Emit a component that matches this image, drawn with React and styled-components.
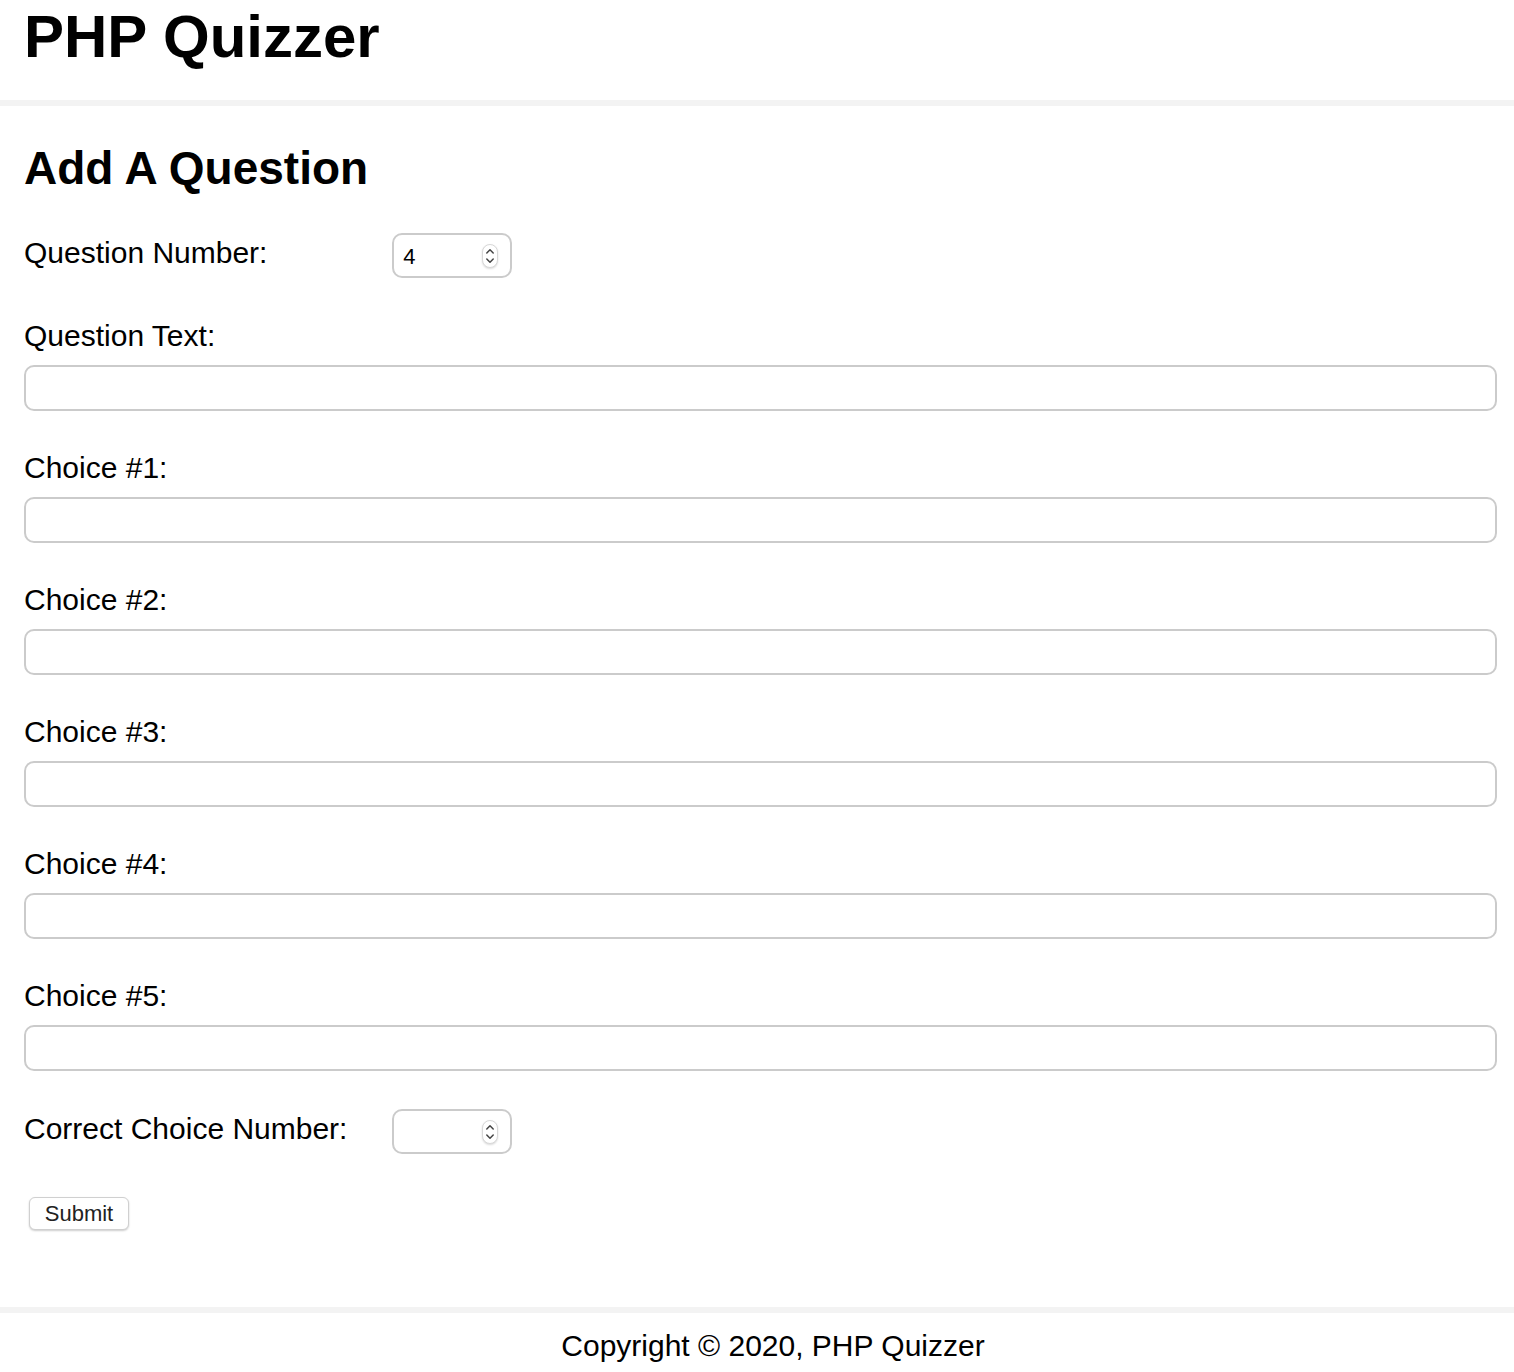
import React from 'react';
import styled, { createGlobalStyle } from 'styled-components';

const GlobalStyle = createGlobalStyle`
  html, body {
    margin: 0;
    padding: 0;
    background: #ffffff;
    color: #000000;
    font-family: 'Liberation Sans', Arial, sans-serif;
  }
`;

const Header = styled.header`
  padding: 2px 24px 29px;
  border-bottom: 6px solid #f3f3f3;
`;

const Logo = styled.h1`
  margin: 0;
  font-size: 60px;
  line-height: 69px;
  font-weight: 700;
`;

const Main = styled.main`
  padding: 36px 17px 77px 24px;
`;

const Title = styled.h2`
  margin: 0 0 39px;
  font-size: 46px;
  line-height: 52px;
  font-weight: 700;
`;

const Form = styled.form`
  display: flex;
  flex-direction: column;
`;

const InlineRow = styled.div`
  display: flex;
  align-items: flex-start;
  margin-top: ${(p) => p.$top || 0}px;
`;

const Field = styled.div`
  display: flex;
  flex-direction: column;
  margin-top: ${(p) => p.$top}px;
`;

const Label = styled.label`
  display: block;
  font-size: 30px;
  line-height: 36px;
  ${(p) => (p.$inline ? 'width: 25%; flex: none; margin-top: 2px;' : 'margin-bottom: 11px;')}
`;

const TextInput = styled.input`
  box-sizing: border-box;
  width: 100%;
  height: 46px;
  border: 2px solid #cbcbcb;
  border-radius: 10px;
  padding: 0 10px;
  font-family: 'Liberation Sans', Arial, sans-serif;
  font-size: 21px;
  background: #fff;
  outline: none;
`;

const NumberWrap = styled.div`
  position: relative;
  width: 120px;
  height: 45px;
`;

const NumberInput = styled.input`
  box-sizing: border-box;
  width: 100%;
  height: 100%;
  border: 2px solid #cbcbcb;
  border-radius: 10px;
  padding: 3px 0 0 9px;
  font-family: 'Liberation Sans', Arial, sans-serif;
  font-size: 22px;
  color: #000;
  background: #fff;
  outline: none;
  -moz-appearance: textfield;
  &::-webkit-inner-spin-button,
  &::-webkit-outer-spin-button {
    -webkit-appearance: none;
    margin: 0;
  }
`;

const Spinner = styled.div`
  position: absolute;
  right: 14px;
  top: 11px;
  width: 16px;
  height: 24px;
  box-sizing: border-box;
  border: 1px solid #d8d8d8;
  border-radius: 8px;
  background: #fff;
  box-shadow: 0 1px 2px rgba(0, 0, 0, 0.15);
  display: flex;
  align-items: center;
  justify-content: center;
`;

const SubmitButton = styled.button`
  margin: 43px 0 0 5px;
  align-self: flex-start;
  width: 100px;
  height: 33px;
  border: 1px solid #d0d0d0;
  border-radius: 6px;
  background: #fff;
  box-shadow: 0 1px 2px rgba(0, 0, 0, 0.2);
  font-family: 'Liberation Sans', Arial, sans-serif;
  font-size: 22px;
  color: #222;
  padding: 0;
`;

const Footer = styled.footer`
  border-top: 6px solid #f3f3f3;
  padding: 15px 0 15px 32px;
  text-align: center;
  font-size: 30px;
  line-height: 36px;
`;

const SpinIcon = () => (
  <svg width="10" height="18" viewBox="0 0 10 18" fill="none" stroke="#444" strokeWidth="1.5" strokeLinecap="round" strokeLinejoin="round">
    <path d="M1.8 6 L5 2.8 L8.2 6" />
    <path d="M1.8 12 L5 15.2 L8.2 12" />
  </svg>
);

const NumberField = ({ id, value }) => (
  <NumberWrap>
    <NumberInput id={id} type="number" defaultValue={value} />
    <Spinner>
      <SpinIcon />
    </Spinner>
  </NumberWrap>
);

const choices = [1, 2, 3, 4, 5];

const App = () => {
  return (
    <>
      <GlobalStyle />
      <Header>
        <Logo>PHP Quizzer</Logo>
      </Header>
      <Main>
        <Title>Add A Question</Title>
        <Form onSubmit={(e) => e.preventDefault()}>
          <InlineRow>
            <Label $inline htmlFor="question_number">Question Number:</Label>
            <NumberField id="question_number" value={4} />
          </InlineRow>
          <Field $top={40}>
            <Label htmlFor="question_text">Question Text:</Label>
            <TextInput id="question_text" type="text" />
          </Field>
          {choices.map((n) => (
            <Field key={n} $top={39}>
              <Label htmlFor={`choice${n}`}>Choice #{n}:</Label>
              <TextInput id={`choice${n}`} type="text" />
            </Field>
          ))}
          <InlineRow $top={38}>
            <Label $inline htmlFor="correct_choice">Correct Choice Number:</Label>
            <NumberField id="correct_choice" value="" />
          </InlineRow>
          <SubmitButton type="submit">Submit</SubmitButton>
        </Form>
      </Main>
      <Footer>Copyright &copy; 2020, PHP Quizzer</Footer>
    </>
  );
};

export default App;
